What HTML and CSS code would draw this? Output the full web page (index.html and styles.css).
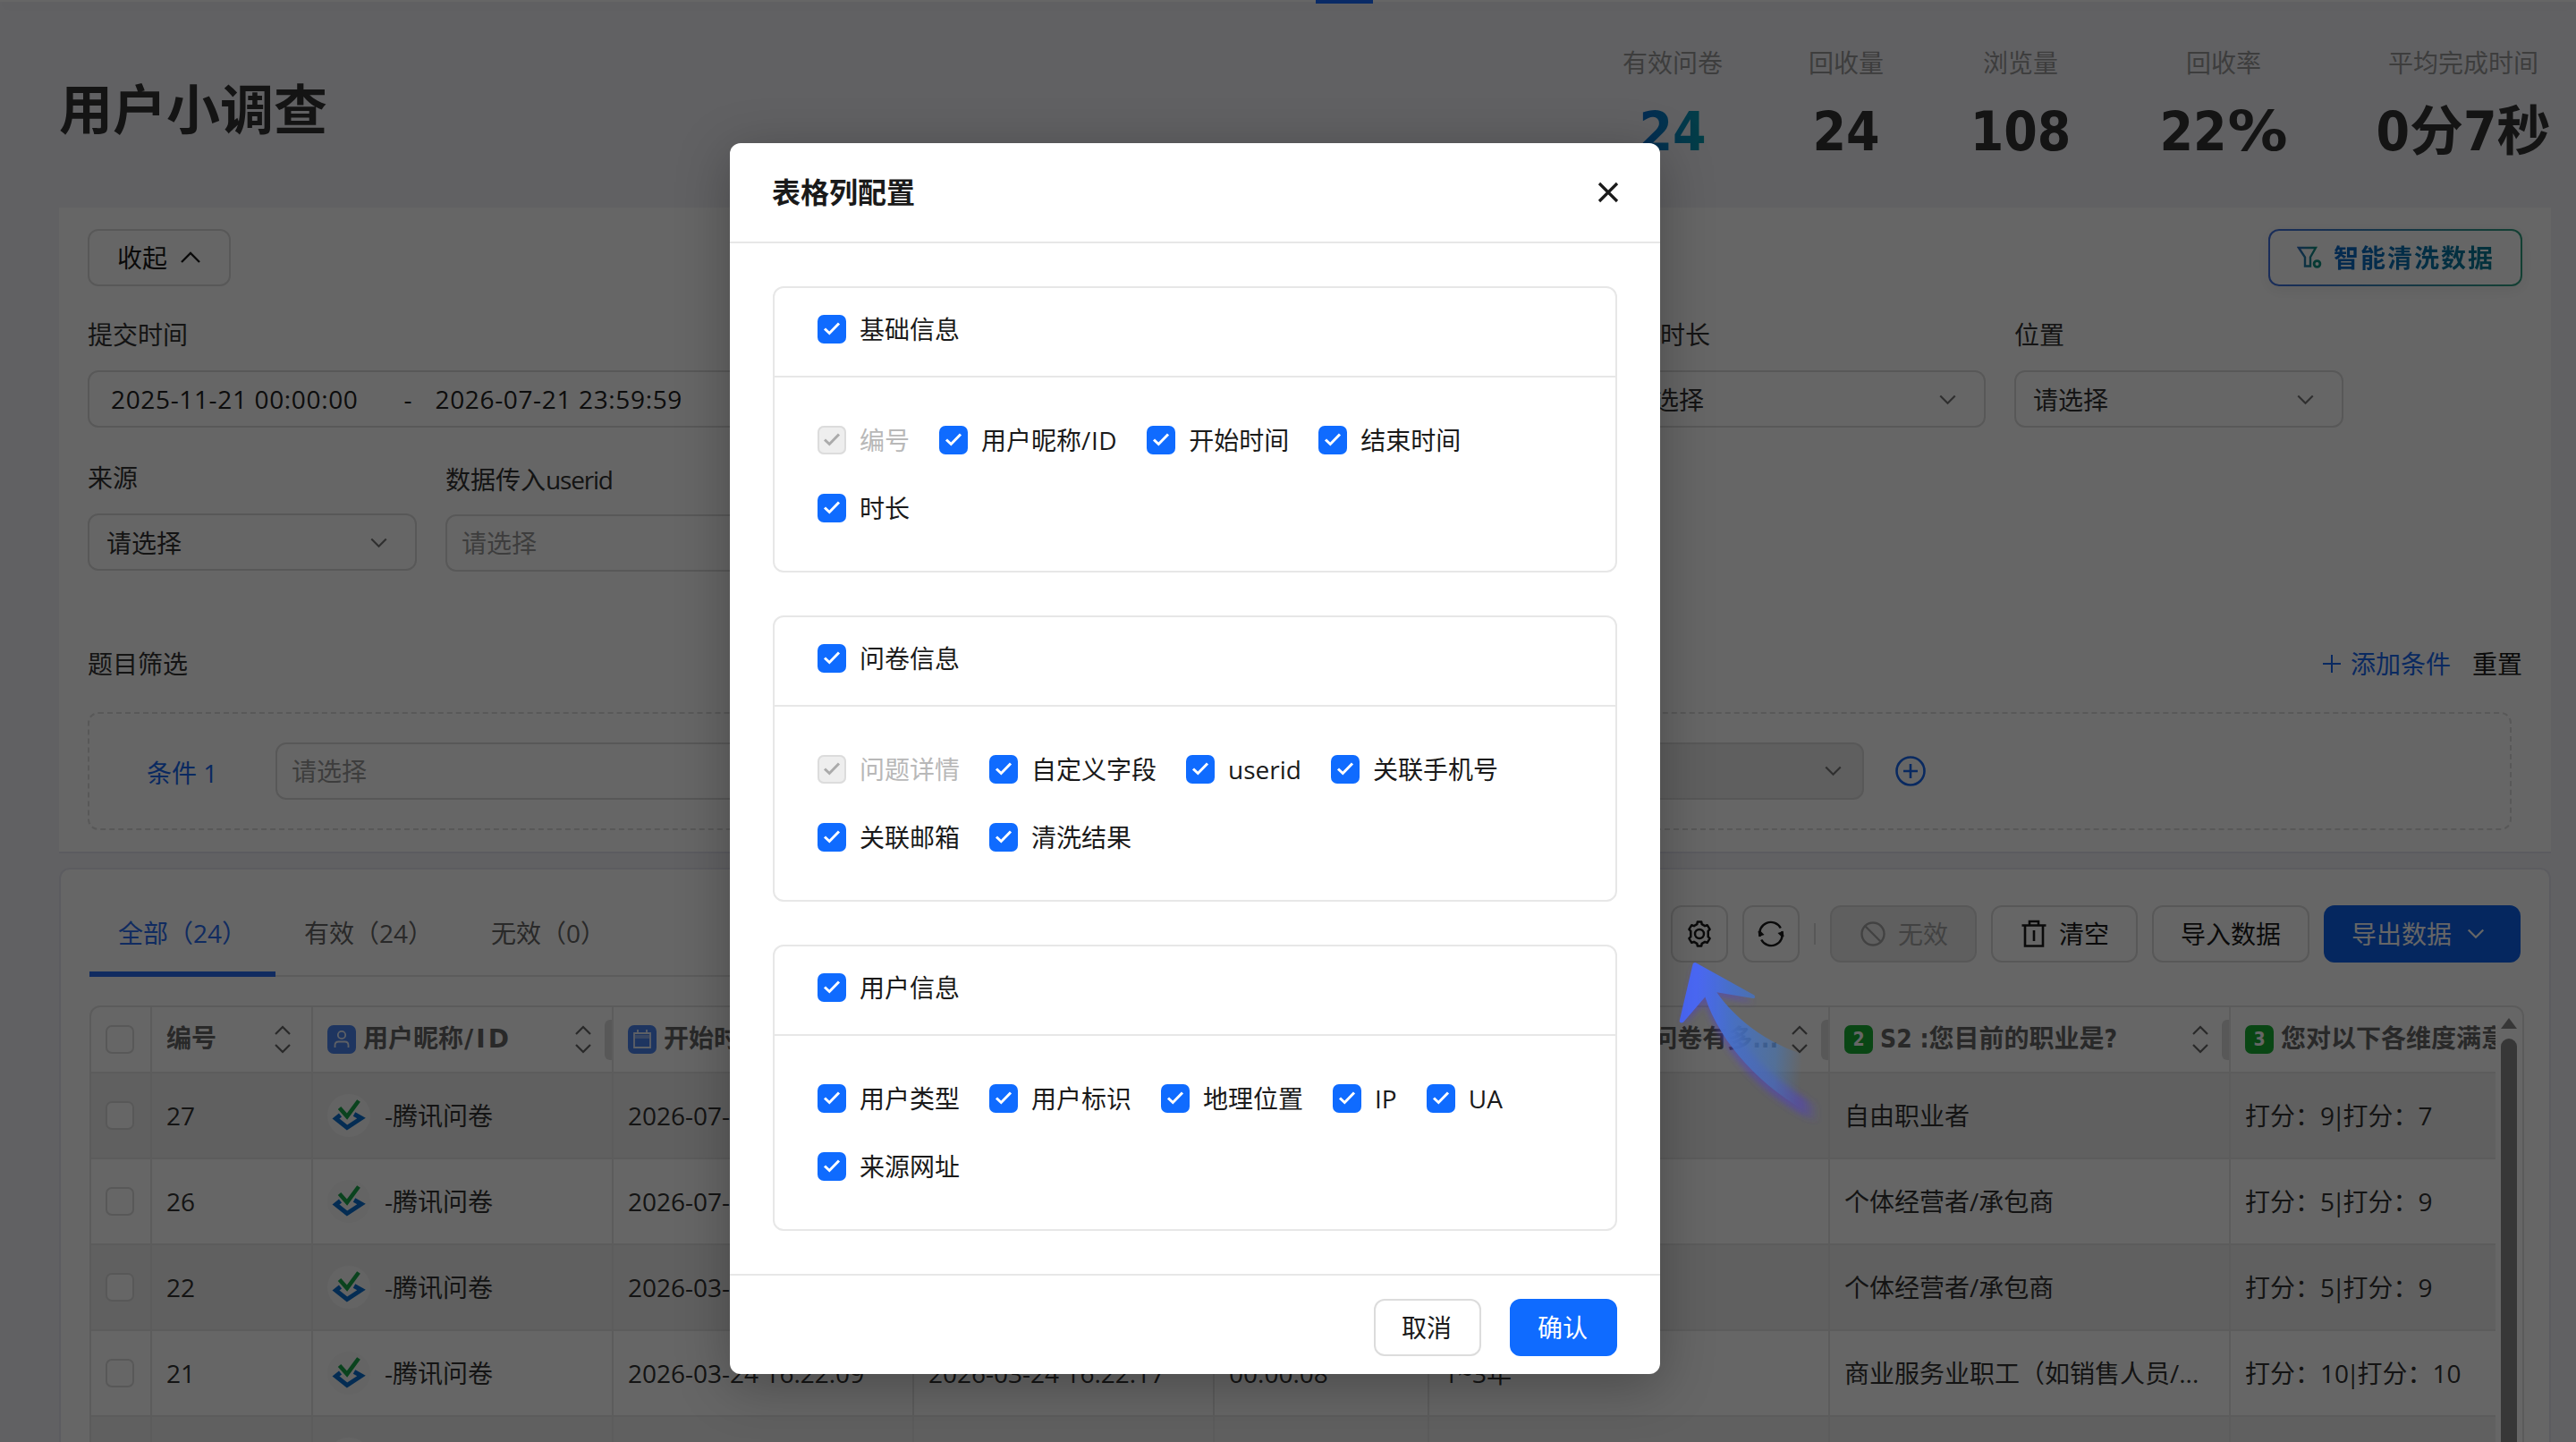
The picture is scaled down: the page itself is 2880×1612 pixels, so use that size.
FILE: index.html
```html
<!DOCTYPE html>
<html lang="zh-CN">
<head>
<meta charset="utf-8">
<title>用户小调查</title>
<link rel="stylesheet" href="styles.css">
</head>
<body>
<svg class="defs" width="0" height="0" aria-hidden="true">
  <symbol id="i-down" viewBox="0 0 24 24"><path d="M3 7l9 9 9-9" fill="none" stroke="currentColor" stroke-width="2.4"/></symbol>
  <symbol id="i-up" viewBox="0 0 24 24"><path d="M2 17l10-10 10 10" fill="none" stroke="currentColor" stroke-width="2.4"/></symbol>
  <symbol id="i-sort" viewBox="0 0 20 32"><path d="M2 10l8-8 8 8M2 22l8 8 8-8" fill="none" stroke="currentColor" stroke-width="2.2"/></symbol>
  <symbol id="i-check" viewBox="0 0 32 32"><path d="M8 15.500l5.300 5L24 9.500" fill="none" stroke="currentColor" stroke-width="3"/></symbol>
  <symbol id="i-avatar" viewBox="0 0 48 48">
    <circle cx="24" cy="24" r="24" fill="#fafafa"/>
    <path d="M14.500 23.500L9.500 27.500 22 37.500 38 27 30 22.500" fill="none" stroke="#0a6fd0" stroke-width="5"/>
    <path d="M13.500 15.500L22 25 35 7.500" fill="none" stroke="#19a84b" stroke-width="4.600"/>
  </symbol>
</svg>

<div class="topbar"><span class="topbar-mark"></span></div>
<main class="page">
  <header class="head">
    <h1 class="title">用户小调查</h1>
    <div class="stats">
      <div class="stat w112"><span class="stat-name">有效问卷</span><b class="stat-num grad">24</b></div>
      <div class="stat w84"><span class="stat-name">回收量</span><b class="stat-num">24</b></div>
      <div class="stat w114"><span class="stat-name">浏览量</span><b class="stat-num">108</b></div>
      <div class="stat w148"><span class="stat-name">回收率</span><b class="stat-num">22<span class="pct">%</span></b></div>
      <div class="stat w196"><span class="stat-name">平均完成时间</span><b class="stat-num">0分7秒</b></div>
    </div>
  </header>

  <section class="filter">
    <div class="filter-top">
      <button class="btn fold">收起<svg class="ic24"><use href="#i-up"/></svg></button>
      <button class="clean">
        <svg class="clean-ic" viewBox="0 0 30 28"><defs><linearGradient id="g" x1="0" x2="1"><stop offset="0" stop-color="#2f6fc0"/><stop offset="1" stop-color="#109080"/></linearGradient></defs><path d="M2 3h19l-6 10.500V23.500h-6V13.500z" fill="none" stroke="url(#g)" stroke-width="2.400"/><circle cx="22.500" cy="21" r="3.400" fill="none" stroke="#109080" stroke-width="2.800"/></svg>
        <span class="clean-text">智能清洗数据</span>
      </button>
    </div>
    <div class="fields first">
      <div class="field f-date"><label>提交时间</label><div class="box date"><span>2025-11-21 00:00:00</span><i>-</i><span>2026-07-21 23:59:59</span></div></div>
      <div class="field f-long"><label>答题时长</label><div class="box sel">请选择<svg class="ic24"><use href="#i-down"/></svg></div></div>
      <div class="field"><label>位置</label><div class="box sel">请选择<svg class="ic24"><use href="#i-down"/></svg></div></div>
    </div>
    <div class="fields second">
      <div class="field"><label>来源</label><div class="box sel">请选择<svg class="ic24"><use href="#i-down"/></svg></div></div>
      <div class="field shifted"><label>数据传入<span class="tight">userid</span></label><div class="box inp">请选择</div></div>
    </div>
    <div class="cond-head"><span>题目筛选</span><div class="cond-links"><a class="add"><svg class="ic24" viewBox="0 0 24 24"><path d="M12 2v20M2 12h20" stroke="currentColor" stroke-width="2"/></svg>添加条件</a><a class="reset">重置</a></div></div>
    <div class="cond">
      <span class="cond-name">条件 1</span>
      <div class="box inp c1">请选择</div>
      <div class="box sel c2"><svg class="ic24"><use href="#i-down"/></svg></div>
      <svg class="plus" viewBox="0 0 36 36"><circle cx="18" cy="18" r="15.500" fill="none" stroke="currentColor" stroke-width="2.600"/><path d="M18 10v16M10 18h16" stroke="currentColor" stroke-width="2.600"/></svg>
    </div>
  </section>

  <section class="data">
    <div class="bar">
      <nav class="tabs"><a class="tab on">全部（24）</a><a class="tab">有效（24）</a><a class="tab">无效（0）</a></nav>
      <div class="tools">
        <button class="btn sq"><svg viewBox="0 0 32 32"><path d="M13.300 5.200 13.800 2.500h4.400l.5 2.700 3.400 2 2.600-1 2.900 4.600-1.900 2v6.400l1.900 2-2.900 4.600-2.600-1-3.400 2-.5 2.700h-4.400l-.5-2.700-3.400-2-2.600 1-2.900-4.600 1.900-2v-6.400l-1.900-2 2.900-4.600 2.600 1z" fill="none" stroke="currentColor" stroke-width="2.500" stroke-linejoin="round"/><circle cx="16" cy="16" r="5" fill="none" stroke="currentColor" stroke-width="2.500"/></svg></button>
        <button class="btn sq"><svg viewBox="0 0 32 32"><path d="M3.800 19A12.500 12.500 0 0 1 26.800 9.500M28.200 13A12.500 12.500 0 0 1 5.200 22.500" fill="none" stroke="currentColor" stroke-width="2.400"/><path d="M1.500 13h3l4 4-6 2zM30.500 19h-3l-4-4 6-2z" fill="currentColor"/></svg></button>
        <span class="split"></span>
        <button class="btn off"><svg viewBox="0 0 32 32"><circle cx="16" cy="16" r="12.500" fill="none" stroke="currentColor" stroke-width="2.400"/><path d="M7.500 7.500l17 17" stroke="currentColor" stroke-width="2.400"/></svg>无效</button>
        <button class="btn clear"><svg viewBox="0 0 32 32"><path d="M2.500 6.500h27M6 6.500v23h20v-23M11 6V2h10v4M16 12v12" fill="none" stroke="currentColor" stroke-width="2.600"/></svg>清空</button>
        <button class="btn">导入数据</button>
        <button class="btn primary">导出数据<svg class="ic24"><use href="#i-down"/></svg></button>
      </div>
    </div>
    <div class="table">
      <div class="grid">
        <div class="row th">
          <div class="cell"><i class="ck"></i></div>
          <div class="cell">编号<svg class="sort"><use href="#i-sort"/></svg></div>
          <div class="cell"><svg class="tag" viewBox="0 0 32 32"><rect width="32" height="32" rx="7" fill="#4b84f0"/><circle cx="16" cy="11" r="4.200" fill="none" stroke="#e8effd" stroke-width="1.800"/><path d="M8.500 25v-2.500q0-4 4-4h7q4 0 4 4V25" fill="none" stroke="#e8effd" stroke-width="1.800"/></svg>用户昵称<span class="lat">/ID</span><svg class="sort"><use href="#i-sort"/></svg><i class="grip"></i></div>
          <div class="cell"><svg class="tag" viewBox="0 0 32 32"><rect width="32" height="32" rx="7" fill="#4b84f0"/><path d="M7 9h18v16H7zM11 5v5M21 5v5" fill="none" stroke="#e8effd" stroke-width="1.800"/><path d="M8 11h16v4H8z" fill="#8fb2f6"/></svg>开始时间</div>
          <div class="cell">结束时间</div>
          <div class="cell">时长</div>
          <div class="cell"><b class="no">1</b><span class="clip"><span>您填写过问卷有多...</span></span><svg class="sort"><use href="#i-sort"/></svg><i class="grip"></i></div>
          <div class="cell"><b class="no">2</b>S2 :您目前的职业是?<svg class="sort"><use href="#i-sort"/></svg><i class="grip"></i></div>
          <div class="cell"><b class="no">3</b>您对以下各维度满意</div>
        </div>
        <div class="row odd"><div class="cell"><i class="ck"></i></div><div class="cell">27</div><div class="cell"><svg class="ava"><use href="#i-avatar"/></svg>-腾讯问卷</div><div class="cell">2026-07-21 10:30:12</div><div class="cell"></div><div class="cell"></div><div class="cell"></div><div class="cell">自由职业者</div><div class="cell">打分：9<span class="pipe">|</span>打分：7</div></div>
        <div class="row"><div class="cell"><i class="ck"></i></div><div class="cell">26</div><div class="cell"><svg class="ava"><use href="#i-avatar"/></svg>-腾讯问卷</div><div class="cell">2026-07-21 10:12:40</div><div class="cell"></div><div class="cell"></div><div class="cell"></div><div class="cell">个体经营者/承包商</div><div class="cell">打分：5<span class="pipe">|</span>打分：9</div></div>
        <div class="row odd"><div class="cell"><i class="ck"></i></div><div class="cell">22</div><div class="cell"><svg class="ava"><use href="#i-avatar"/></svg>-腾讯问卷</div><div class="cell">2026-03-24 16:24:31</div><div class="cell"></div><div class="cell"></div><div class="cell"></div><div class="cell">个体经营者/承包商</div><div class="cell">打分：5<span class="pipe">|</span>打分：9</div></div>
        <div class="row"><div class="cell"><i class="ck"></i></div><div class="cell">21</div><div class="cell"><svg class="ava"><use href="#i-avatar"/></svg>-腾讯问卷</div><div class="cell">2026-03-24 16:22:09</div><div class="cell">2026-03-24 16:22:17</div><div class="cell">00:00:08</div><div class="cell">1~3年</div><div class="cell">商业服务业职工（如销售人员/...</div><div class="cell">打分：10<span class="pipe">|</span>打分：10</div></div>
        <div class="row odd"><div class="cell"></div><div class="cell"></div><div class="cell"><svg class="ava"><use href="#i-avatar"/></svg></div><div class="cell"></div><div class="cell"></div><div class="cell"></div><div class="cell"></div><div class="cell"></div><div class="cell"></div></div>
      </div>
      <div class="scroll"><i class="scroll-up"></i><i class="thumb"></i></div>
    </div>
  </section>
</main>

<div class="mask"></div>

<svg class="pointer" viewBox="0 0 600 800">
  <defs>
    <linearGradient id="pg" gradientUnits="userSpaceOnUse" x1="50" y1="0" x2="500" y2="30"><stop offset="0" stop-color="#4b68ff"/><stop offset=".18" stop-color="#4b69f6"/><stop offset=".45" stop-color="#4670c8" stop-opacity=".95"/><stop offset=".8" stop-color="#4676b8" stop-opacity=".6"/><stop offset="1" stop-color="#4676b0" stop-opacity="0"/></linearGradient>
    <linearGradient id="ps" gradientUnits="userSpaceOnUse" x1="50" y1="0" x2="520" y2="0"><stop offset="0" stop-color="#5040d0" stop-opacity=".5"/><stop offset=".88" stop-color="#5040c0" stop-opacity=".55"/><stop offset="1" stop-color="#5040c0" stop-opacity="0"/></linearGradient>
    <filter id="pb" x="-20%" y="-20%" width="140%" height="140%"><feGaussianBlur stdDeviation="11"/></filter>
  </defs>
  <path d="M100 245L302 362 178 342 190 380C250 500 360 620 520 710L520 765C330 680 190 520 140 360L62 440z" fill="url(#ps)" filter="url(#pb)"/>
  <path d="M98 232Q101 226 108 228L304 337Q309 345 303 348L178 327C250 430 380 525 540 552L510 745C330 650 190 500 139 343L66 428Q54 433 53 423z" fill="url(#pg)"/>
</svg>

<div class="modal" role="dialog">
  <div class="modal-head"><h2>表格列配置</h2><svg viewBox="0 0 24 24"><path d="M2 2l20 20M22 2L2 22" stroke="currentColor" stroke-width="3.200"/></svg></div>
  <div class="modal-body">
    <div class="group">
      <div class="group-head"><label class="opt"><svg class="cb"><use href="#i-check"/></svg>基础信息</label></div>
      <div class="group-body">
        <label class="opt dis"><svg class="cb"><use href="#i-check"/></svg>编号</label>
        <label class="opt"><svg class="cb"><use href="#i-check"/></svg>用户昵称<span class="lid">/ID</span></label>
        <label class="opt"><svg class="cb"><use href="#i-check"/></svg>开始时间</label>
        <label class="opt"><svg class="cb"><use href="#i-check"/></svg>结束时间</label>
        <span class="brk"></span>
        <label class="opt"><svg class="cb"><use href="#i-check"/></svg>时长</label>
      </div>
    </div>
    <div class="group">
      <div class="group-head"><label class="opt"><svg class="cb"><use href="#i-check"/></svg>问卷信息</label></div>
      <div class="group-body">
        <label class="opt dis"><svg class="cb"><use href="#i-check"/></svg>问题详情</label>
        <label class="opt"><svg class="cb"><use href="#i-check"/></svg>自定义字段</label>
        <label class="opt"><svg class="cb"><use href="#i-check"/></svg>userid</label>
        <label class="opt"><svg class="cb"><use href="#i-check"/></svg>关联手机号</label>
        <span class="brk"></span>
        <label class="opt"><svg class="cb"><use href="#i-check"/></svg>关联邮箱</label>
        <label class="opt"><svg class="cb"><use href="#i-check"/></svg>清洗结果</label>
      </div>
    </div>
    <div class="group">
      <div class="group-head"><label class="opt"><svg class="cb"><use href="#i-check"/></svg>用户信息</label></div>
      <div class="group-body">
        <label class="opt"><svg class="cb"><use href="#i-check"/></svg>用户类型</label>
        <label class="opt"><svg class="cb"><use href="#i-check"/></svg>用户标识</label>
        <label class="opt"><svg class="cb"><use href="#i-check"/></svg>地理位置</label>
        <label class="opt"><svg class="cb"><use href="#i-check"/></svg>IP</label>
        <label class="opt"><svg class="cb"><use href="#i-check"/></svg>UA</label>
        <span class="brk"></span>
        <label class="opt"><svg class="cb"><use href="#i-check"/></svg>来源网址</label>
      </div>
    </div>
  </div>
  <div class="modal-foot"><button class="mbtn">取消</button><button class="mbtn ok">确认</button></div>
</div>
</body>
</html>
```
FILE: styles.css
```css
* { box-sizing: border-box; }
html, body { margin: 0; width: 2880px; height: 1612px; overflow: hidden; }
body {
  position: relative;
  background: #f3f3f8;
  color: #333;
  font: 28px/36px "Open Sans", "Noto Sans CJK SC", sans-serif;
}
.defs { position: absolute; }
button { font: inherit; color: inherit; margin: 0; cursor: pointer; }
svg { display: block; flex: none; }
.ic24 { width: 24px; height: 24px; }

.topbar { height: 2px; display: flex; padding-left: 1471px; background: #fff; box-shadow: 0 4px 14px rgba(0, 0, 0, .1); }
.topbar-mark { width: 64px; height: 4px; flex: none; background: #1769ff; }

.page { height: 1610px; padding: 0 28px 0 66px; overflow: hidden; }
.head { height: 230px; display: flex; justify-content: space-between; }
.title { margin: 86px 0 0; font: 700 60px/72px "DejaVu Sans Condensed", "Noto Sans CJK SC", sans-serif; }
.stats { display: flex; gap: 96px; padding-top: 50px; }
.stat { display: flex; flex-direction: column; align-items: center; gap: 23px; white-space: nowrap; }
.stat-name { color: #999; }
.stat-num { font: 700 60px/72px "DejaVu Sans Condensed", "Noto Sans CJK SC", sans-serif; }
.pct { font-family: "DejaVu Sans"; font-size: 62px; display: inline-block; line-height: 60px; margin: 0 3px; transform: scaleX(1.08); }
.grad { background: linear-gradient(90deg, #0a6cd0, #08a0b0); -webkit-background-clip: text; background-clip: text; color: transparent; }
.w112 { width: 112px; } .w84 { width: 84px; } .w114 { width: 114px; } .w148 { width: 148px; } .w196 { width: 196px; }

.filter { height: 722px; padding: 24px 32px 0; background: #fff; border-bottom: 2px solid #e4e4f0; }
.filter-top { display: flex; justify-content: space-between; }
.btn {
  height: 64px; padding: 0 30px; display: flex; align-items: center; justify-content: center;
  border: 2px solid #dcdcdc; border-radius: 12px; background: #fff; color: #1a1a1a; white-space: nowrap;
}
.fold { width: 160px; gap: 14px; }
.clean {
  width: 284px; height: 64px; padding: 0 0 0 30px; display: flex; align-items: center; gap: 11px;
  border: 2px solid transparent; border-radius: 12px; white-space: nowrap;
  background: linear-gradient(#fff, #fff) padding-box, linear-gradient(90deg, #3f6fe0, #30a080) border-box;
  box-shadow: 0 4px 16px rgba(0, 0, 0, .07);
}
.clean-ic { width: 30px; height: 28px; }
.clean-text { font-weight: 700; letter-spacing: 2px; background: linear-gradient(90deg, #0a68c8, #087c94); -webkit-background-clip: text; background-clip: text; color: transparent; }

.fields { display: flex; gap: 32px; }
.first { margin-top: 36px; }
.second { margin-top: 38px; }
.field { width: 368px; display: flex; flex-direction: column; gap: 22px; }
.f-date { width: 1168px; margin-right: 502px; }
.f-long { width: 420px; }
.shifted { position: relative; top: 2px; }
.shifted .box { position: relative; top: -1px; }
.tight { letter-spacing: -1.2px; }
.box { height: 64px; display: flex; align-items: center; border: 2px solid #dcdcdc; border-radius: 12px; color: #333; background: #fff; }
.sel { justify-content: space-between; padding: 2px 28px 0 19px; }
.sel .ic24 { color: #777; width: 25px; height: 22px; }
.inp { padding-left: 16px; color: #999; }
.date { padding-left: 24px; letter-spacing: .65px; color: #222; }
.date i { font-style: normal; width: 86px; padding-left: 51px; }

.cond-head { margin-top: 86px; display: flex; justify-content: space-between; }
.cond-links { display: flex; gap: 24px; }
.add { display: flex; align-items: center; gap: 9px; color: #1768ef; }
.reset { color: #1a1a1a; }
.cond { margin-top: 36px; margin-right: 12px; height: 132px; display: flex; align-items: center; padding-left: 64px; border: 2px dashed #dcdcdc; border-radius: 12px; }
.cond-name { width: 144px; padding-top: 3px; color: #1768ef; }
.c1 { width: 872px; margin-right: 16px; }
.c2 { width: 888px; background: #ededed; justify-content: flex-end; padding: 0 20px 0 0; }
.plus { width: 36px; height: 36px; margin-left: 34px; color: #1768ef; }

.data { margin-top: 16px; height: 660px; border: 2px solid #e6e6f0; border-radius: 12px; background: #fff; padding: 0 32px; }
.bar { height: 120px; display: flex; }
.tabs { width: 1700px; display: flex; border-bottom: 2px solid #e7e7e7; }
.tab { height: 120px; width: 209px; padding: 53px 0 0 32px; white-space: nowrap; color: #666; flex: none; }
.tab:last-child { width: 192px; }
.tab.on { width: 208px; color: #2a6df0; border-bottom: 6px solid #2a6df0; }
.tools { margin-left: auto; padding-top: 40px; display: flex; gap: 16px; }
.tools .btn svg { width: 32px; height: 32px; }
.tools .sq { width: 64px; padding: 0; }
.split { width: 2px; height: 24px; margin-top: 20px; background: #dcdcdc; }
.tools .off { width: 164px; gap: 12px; padding: 0; background: #eee; color: #a6a6a6; }
.tools .clear { width: 164px; gap: 12px; padding: 0; }
.tools .primary { width: 220px; padding: 0; gap: 16px; background: #0e62ee; border-color: #0e62ee; color: #fff; justify-content: flex-start; padding-left: 29px; }
.tools .btn.primary svg { width: 22px; height: 22px; }

.table { margin: 32px -4px 0 0; height: 600px; display: flex; border: 2px solid #e4e4e4; border-radius: 12px; overflow: hidden; }
.grid { width: 2688px; overflow: hidden; flex: none; }
.row { width: 2840px; height: 96px; display: grid; grid-template-columns: 68px 180px 336px 336px 336px 240px 448px 448px 448px; border-bottom: 2px solid #e7e7e7; }
.cell { min-width: 0; padding-left: 16px; display: flex; align-items: center; border-right: 2px solid #e7e7e7; white-space: nowrap; overflow: hidden; }
.odd { background: #f1f1f1; }
.th { height: 74px; color: #666; font-family: "DejaVu Sans Condensed", "Noto Sans CJK SC", sans-serif; font-weight: 700; }
.lat { font-family: "DejaVu Sans"; letter-spacing: 3px; margin-left: 1px; }
.ck { width: 32px; height: 32px; border: 2px solid #dcdcdc; border-radius: 7px; background: #fff; flex: none; }
.sort { width: 20px; height: 32px; margin: 0 22px 0 auto; }
.tag { width: 32px; height: 32px; margin-right: 8px; }
.no { width: 32px; height: 32px; margin-right: 8px; border-radius: 7px; background: #17b034; color: #fff; font-size: 21px; line-height: 32px; text-align: center; flex: none; }
.grip { width: 8px; height: 45px; margin-left: -8px; border-radius: 6px 0 0 6px; background: #dcdcdc; flex: none; }
.clip { width: 334px; display: flex; justify-content: flex-end; }
.pipe { margin: 0 -3px; }
.ava { width: 48px; height: 48px; margin-right: 16px; }
.scroll { width: 30px; padding: 12px 6px 0; display: flex; flex-direction: column; gap: 11px; }
.scroll-up { border: 9px solid transparent; border-top: 0; border-bottom: 12px solid #8b8b8b; height: 0; }
.thumb { flex: 1; border-radius: 9px 9px 0 0; background: #8b8b8b; }

.mask { position: absolute; inset: 0; background: rgba(0, 0, 0, .6); }
.pointer { position: absolute; left: 1860px; top: 1000px; width: 200px; height: 267px; }

.modal { position: absolute; left: 816px; top: 160px; width: 1040px; height: 1376px; border-radius: 12px; background: #fff; color: #1a1a1a; box-shadow: 0 12px 60px rgba(0, 0, 0, .28); }
.modal-head { height: 112px; padding: 0 46px 0 47px; display: flex; align-items: center; justify-content: space-between; border-bottom: 2px solid #e7e7e7; }
.modal-head h2 { margin: 0; font-size: 32px; line-height: 40px; font-weight: 700; }
.modal-head svg { width: 24px; height: 24px; }
.modal-body { height: 1152px; padding: 48px; display: flex; flex-direction: column; gap: 48px; }
.group { height: 320px; border: 2px solid #e7e7e7; border-radius: 12px; }
.group-head { height: 100px; padding: 30px 48px 0; border-bottom: 2px solid #e7e7e7; }
.group-body { padding: 54px 48px 0; display: flex; flex-wrap: wrap; gap: 0 32px; }
.opt { height: 32px; display: flex; align-items: center; padding-right: 1px; line-height: 32px; white-space: nowrap; }
.lid { letter-spacing: .6px; }
.brk { width: 100%; height: 44px; }
.cb { width: 32px; height: 32px; margin-right: 15px; border-radius: 7px; background: #0f6bff; color: #fff; }
.dis { color: #b8b8b8; }
.dis .cb { background: #eee; color: #ababab; box-shadow: inset 0 0 0 2px #dcdcdc; }
.modal-foot { height: 112px; padding: 26px 48px 0; display: flex; justify-content: flex-end; gap: 32px; border-top: 2px solid #e7e7e7; }
.mbtn { width: 120px; height: 64px; padding: 0 2px 0 0; border: 2px solid #dcdcdc; border-radius: 12px; background: #fff; }
.ok { background: #0f6bff; border-color: #0f6bff; color: #fff; }
```
